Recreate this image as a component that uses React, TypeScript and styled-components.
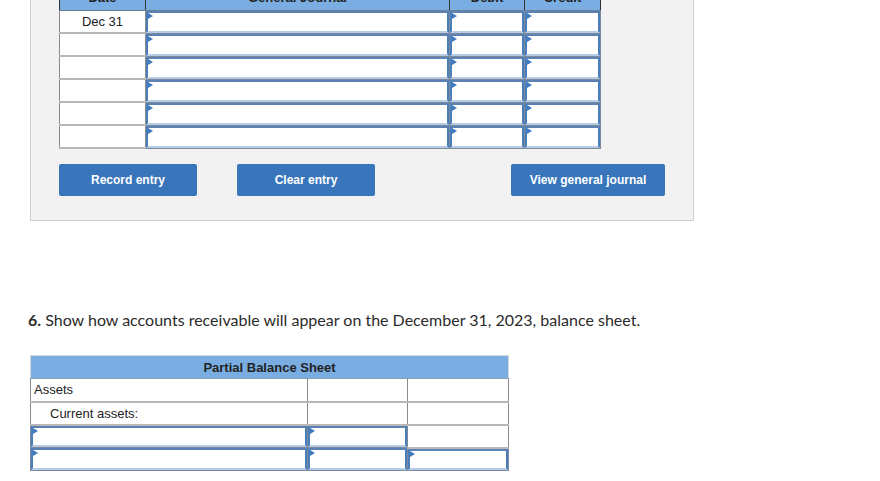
import React from "react";
import styled, { createGlobalStyle } from "styled-components";

const Global = createGlobalStyle`
  html, body { margin: 0; padding: 0; background: #ffffff; }
  body { font-family: "Liberation Sans", Arial, sans-serif; color: #222; }
  * { box-sizing: border-box; }
`;

const Page = styled.div`
  width: 880px;
  height: 481px;
  overflow: hidden;
  position: relative;
`;

const Shift = styled.div`
  margin-top: -40px;
  padding-left: 30px;
`;

const Panel = styled.div`
  width: 664px;
  background: #f2f2f2;
  border: 1px solid #cfcfcf;
  padding: 25px 28px 24px 28px;
`;

const Journal = styled.table`
  border-collapse: collapse;
  table-layout: fixed;
  width: 541px;
`;

const HeadCell = styled.th<{ $w: number }>`
  width: ${(p) => p.$w}px;
  height: 24px;
  background: #7aaee3;
  border-left: 1px solid #333;
  border-right: 1px solid #333;
  border-bottom: 1px solid #6a7f99;
  font-size: 13px;
  font-weight: bold;
  color: #222;
  padding: 0;
  text-align: center;
`;

const DateCell = styled.td`
  height: 23px;
  background: #fff;
  border: 1px solid #8a8a8a;
  border-bottom-width: 2px;
  border-bottom-color: #b8b8b8;
  font-size: 13px;
  text-align: center;
  padding: 0;
`;

const InputCell = styled.td`
  height: 23px;
  padding: 0;
  border: 1px solid #7d8a99;
  background: #fff;
  position: relative;
`;

const InputBox = styled.div`
  height: 100%;
  width: 100%;
  background: #fff;
  border-top: 2px solid #5b82b2;
  border-left: 2px solid #4a7ebb;
  border-right: 2px solid #4a7ebb;
  border-bottom: 2px solid #b5cbe6;
  position: relative;
`;

const Tri = styled.span`
  position: absolute;
  left: 0;
  top: 0;
  width: 0;
  height: 0;
  border-top: 3px solid transparent;
  border-bottom: 3px solid transparent;
  border-left: 5px solid #3f7ac2;
`;

const Buttons = styled.div`
  display: flex;
  margin-top: 15px;
`;

const Btn = styled.button<{ $w: number; $ml: number }>`
  width: ${(p) => p.$w}px;
  margin-left: ${(p) => p.$ml}px;
  height: 32px;
  background: #3975ba;
  border: none;
  border-radius: 2px;
  color: #fff;
  font-family: "Liberation Sans", Arial, sans-serif;
  font-weight: bold;
  font-size: 12px;
  padding: 0;
`;

const Question = styled.p`
  margin: 88px 0 0 -2px;
  font-family: Lato, "Open Sans", sans-serif;
  font-size: 16px;
  color: #2b2b2b;
  line-height: 22px;
  b { font-weight: bold; }
`;

const Balance = styled.table`
  margin-top: 24px;
  border-collapse: collapse;
  table-layout: fixed;
  width: 478px;
`;

const BsHead = styled.th`
  height: 23px;
  background: #7aaee3;
  border: 1px solid #d8d8d8;
  border-bottom: 1px solid #8aa0b8;
  font-size: 13px;
  font-weight: bold;
  color: #222;
  padding: 0;
`;

const BsCell = styled.td<{ $indent?: number }>`
  height: 23px;
  border: 1px solid #8a8a8a;
  border-bottom-width: 2px;
  border-bottom-color: #b8b8b8;
  background: #fff;
  font-size: 13px;
  padding: 0 0 0 ${(p) => p.$indent ?? 3}px;
  text-align: left;
`;

const Input = () => (
  <InputCell>
    <InputBox>
      <Tri />
    </InputBox>
  </InputCell>
);

export default function App() {
  const rows = [0, 1, 2, 3, 4, 5];
  return (
    <Page>
      <Global />
      <Shift>
        <Panel>
          <Journal>
            <thead>
              <tr>
                <HeadCell $w={86}>Date</HeadCell>
                <HeadCell $w={304}>General Journal</HeadCell>
                <HeadCell $w={75}>Debit</HeadCell>
                <HeadCell $w={76}>Credit</HeadCell>
              </tr>
            </thead>
            <tbody>
              {rows.map((r) => (
                <tr key={r}>
                  <DateCell>{r === 0 ? "Dec 31" : ""}</DateCell>
                  <Input />
                  <Input />
                  <Input />
                </tr>
              ))}
            </tbody>
          </Journal>
          <Buttons>
            <Btn $w={138} $ml={0}>Record entry</Btn>
            <Btn $w={138} $ml={40}>Clear entry</Btn>
            <Btn $w={154} $ml={136}>View general journal</Btn>
          </Buttons>
        </Panel>
        <Question>
          <b>6.</b> Show how accounts receivable will appear on the December 31, 2023, balance sheet.
        </Question>
        <Balance>
          <colgroup>
            <col style={{ width: 277 }} />
            <col style={{ width: 100 }} />
            <col style={{ width: 101 }} />
          </colgroup>
          <thead>
            <tr>
              <BsHead colSpan={3}>Partial Balance Sheet</BsHead>
            </tr>
          </thead>
          <tbody>
            <tr>
              <BsCell>Assets</BsCell>
              <BsCell />
              <BsCell />
            </tr>
            <tr>
              <BsCell $indent={19}>Current assets:</BsCell>
              <BsCell />
              <BsCell />
            </tr>
            <tr>
              <Input />
              <Input />
              <BsCell />
            </tr>
            <tr>
              <Input />
              <Input />
              <Input />
            </tr>
          </tbody>
        </Balance>
      </Shift>
    </Page>
  );
}
